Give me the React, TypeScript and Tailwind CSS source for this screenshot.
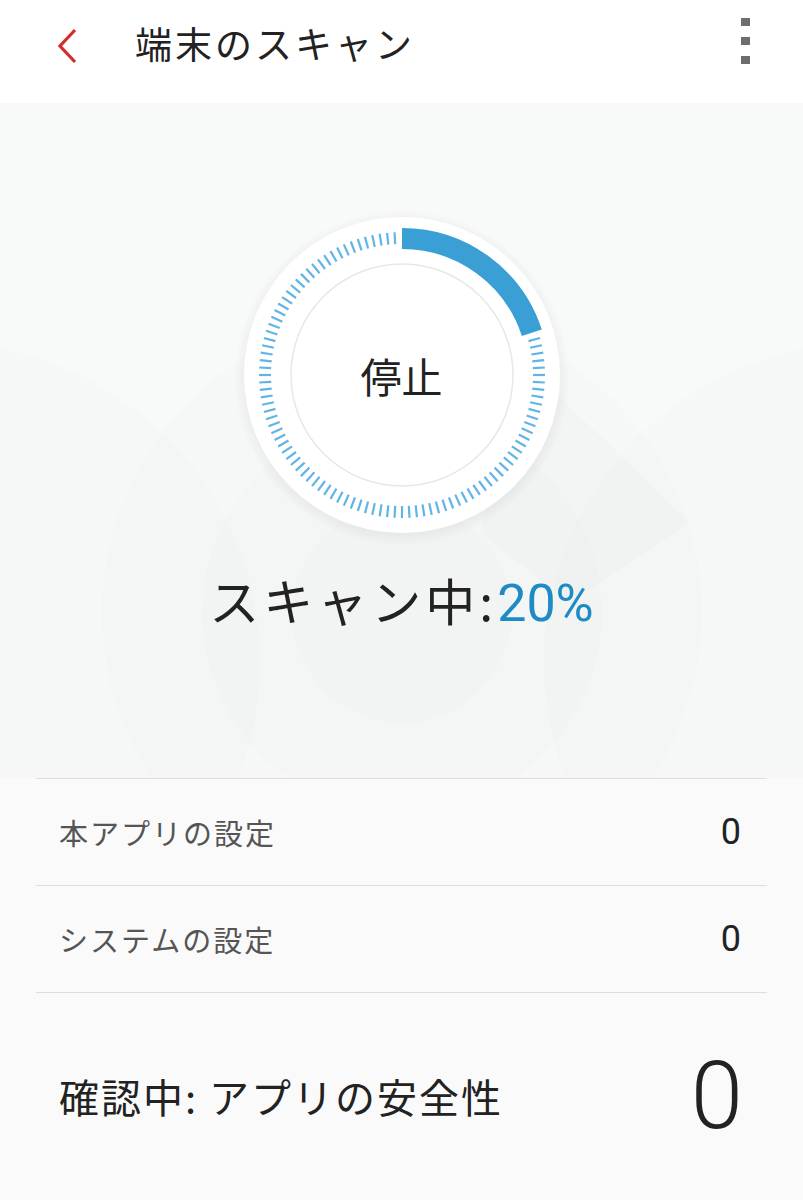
const ticks = Array.from({ length: 120 }, (_, i) => i * 3).filter((a) => a > 73 && a < 360);

const ScanDial = ({ percent }: { percent: number }) => {
    const cx = 170;
    const cy = 170;
    const end = (percent / 100) * 360;
    const rad = (d: number) => ((d - 90) * Math.PI) / 180;
    const r = 136.5;
    const arcEnd = { x: cx + r * Math.cos(rad(end)), y: cy + r * Math.sin(rad(end)) };

    return (
        <svg width="340" height="340" viewBox="0 0 340 340">
            <defs>
                <radialGradient id="halo" cx="50%" cy="50%" r="50%">
                    <stop offset="88%" stopColor="#3c5a5a" stopOpacity="0.1" />
                    <stop offset="100%" stopColor="#3c5a5a" stopOpacity="0" />
                </radialGradient>
            </defs>
            <circle cx={cx} cy={cy + 3} r="168" fill="url(#halo)" />
            <circle cx={cx} cy={cy} r="158" fill="#ffffff" />
            {ticks.map((a) => (
                <line
                    key={a}
                    x1={cx + 131 * Math.cos(rad(a))}
                    y1={cy + 131 * Math.sin(rad(a))}
                    x2={cx + 143 * Math.cos(rad(a))}
                    y2={cy + 143 * Math.sin(rad(a))}
                    stroke="#62b4e6"
                    strokeWidth="2.2"
                />
            ))}
            <path
                d={`M ${cx} ${cy - r} A ${r} ${r} 0 0 1 ${arcEnd.x} ${arcEnd.y}`}
                fill="none"
                stroke="#3a9fd5"
                strokeWidth="21"
            />
            <circle cx={cx} cy={cy} r="111" fill="#ffffff" stroke="#e6e8e8" strokeWidth="1.5" />
        </svg>
    );
};

const Backdrop = () => (
    <svg className="absolute inset-0" width="803" height="675" viewBox="0 0 803 675">
        <g fill="#5a7070" fillOpacity="0.012">
            <circle cx="402" cy="510" r="300" />
            <circle cx="402" cy="510" r="200" />
            <circle cx="402" cy="510" r="110" />
            <circle cx="-60" cy="560" r="320" />
            <circle cx="864" cy="560" r="320" />
        </g>
        <polygon points="525,260 690,420 570,500 480,430" fill="#5a7070" fillOpacity="0.018" />
    </svg>
);

type Row = { label: string; count: number };

const rows: Row[] = [
    { label: "本アプリの設定", count: 0 },
    { label: "システムの設定", count: 0 },
];

export default function App() {
    return (
        <div className="w-[803px] h-[1200px] bg-[#fafafa] overflow-hidden font-['Noto_Sans_CJK_JP','Noto_Sans',sans-serif] text-[#222]">
            <header className="h-[103px] bg-white flex items-start pt-[18px] px-[56px] relative">
                <svg width="24" height="40" viewBox="0 0 24 40" className="mt-[6px]">
                    <polyline points="19,6 4,22 19,38" fill="none" stroke="#d42b2b" strokeWidth="3.2" />
                </svg>
                <h1 className="ml-[55px] text-[37px] leading-[50px] tracking-[3px]">端末のスキャン</h1>
                <div className="absolute right-[53px] top-[18px] flex flex-col gap-[11px]">
                    <span className="block w-[9px] h-[8px] bg-[#6d6d6d]" />
                    <span className="block w-[9px] h-[8px] bg-[#6d6d6d]" />
                    <span className="block w-[9px] h-[8px] bg-[#6d6d6d]" />
                </div>
            </header>

            <section className="relative h-[675px] bg-[#f8f9f9] flex flex-col items-center">
                <Backdrop />
                <div className="relative mt-[102px] w-[340px] h-[340px]">
                    <ScanDial percent={20} />
                    <span className="absolute inset-0 flex items-center justify-center text-[41px] leading-none">
                        停止
                    </span>
                </div>
                <p className="relative mt-[22px] text-[50px] leading-[64px] tracking-[4px]">
                    スキャン中:
                    <span className="font-['Roboto',sans-serif] text-[52px] tracking-[0px] text-[#1f8bc6]">20%</span>
                </p>
            </section>

            <ul className="mx-[36px] border-t border-[#dedede]">
                {rows.map((row) => (
                    <li
                        key={row.label}
                        className="h-[107px] flex items-center justify-between border-b border-[#dedede] pl-[23px] pr-[26px]"
                    >
                        <span className="text-[29px] text-[#555] pt-[2px] tracking-[2px]">{row.label}</span>
                        <span className="font-['Roboto',sans-serif] text-[36px] text-[#222]">{row.count}</span>
                    </li>
                ))}
            </ul>

            <div className="flex items-center justify-between pl-[59px] pr-[60px] h-[210px] pb-[4px]">
                <span className="text-[40px] leading-[56px] tracking-[2px]">確認中: アプリの安全性</span>
                <span className="font-['Roboto',sans-serif] font-light text-[94px] leading-none text-[#222]">0</span>
            </div>
        </div>
    );
}
